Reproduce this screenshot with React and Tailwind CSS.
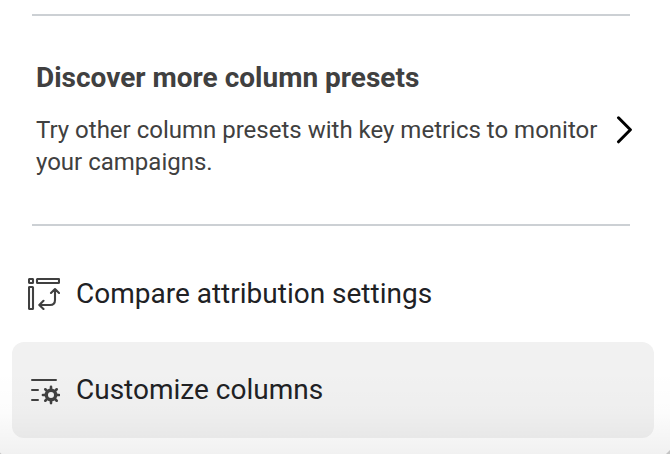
import React from 'react'

const teeth = [0, 45, 90, 135, 180, 225, 270, 315];

function CompareIcon() {
    return (
        <svg className="h-8 w-8 shrink-0" viewBox="0 0 32 32" fill="none" stroke="#404040" strokeWidth="2.1" strokeLinecap="round" strokeLinejoin="round">
            <rect x="1" y="1" width="4" height="4" rx="0.5" />
            <rect x="9" y="1" width="22" height="4" rx="0.5" />
            <rect x="1" y="9" width="4" height="22" rx="0.5" />
            <path d="M11.5 27H22C25.5 27 27 25 27 22V11M15.5 22.8L11.3 27L15.5 31M23 15L27 11L31 15" />
        </svg>
    )
}

function CustomizeIcon() {
    return (
        <svg className="h-8 w-8 shrink-0" viewBox="0 0 32 32" fill="none" stroke="#404040" strokeWidth="2" strokeLinecap="round">
            <path d="M4 6H28M4 16H10M4 26H10" />
            <circle cx="23" cy="21" r="4.7" strokeWidth="3.4" />
            {teeth.map((angle) => (
                <path key={angle} d="M23 15V12.9" strokeWidth="2.6" transform={`rotate(${angle} 23 21)`} />
            ))}
        </svg>
    )
}

function App() {
    return (
        <div className="relative h-[454px] w-[670px] overflow-hidden bg-white pt-[14px] font-['Roboto',sans-serif] text-[#202124]">
            <div className="ml-8 mr-10 flex h-[212px] items-start border-y-2 border-[#ccd0d4] pl-1 pt-11 text-[#404040]">
                <div className="w-[580px] shrink-0">
                    <h2 className="text-[28px] font-bold leading-9">Discover more column presets</h2>
                    <p className="mt-[18px] text-2xl leading-8">
                        Try other column presets with key metrics to monitor<br />your campaigns.
                    </p>
                </div>
                <svg className="mt-[54px] h-8 w-4 shrink-0" viewBox="0 0 16 32" fill="none" stroke="#000" strokeWidth="3" strokeLinecap="round" strokeLinejoin="round">
                    <path d="M2.5 3.8L14.4 15.8L2.5 27.8" />
                </svg>
            </div>

            <div className="mx-3 mr-4 mt-5 flex h-24 items-center gap-4 px-4 text-[28px]">
                <CompareIcon />
                <span>Compare attribution settings</span>
            </div>
            <div className="mx-3 mr-4 flex h-24 items-center gap-4 rounded-xl bg-[#f1f1f1] px-4 text-[28px]">
                <CustomizeIcon />
                <span>Customize columns</span>
            </div>

            {/* shade at the bottom edge of the menu */}
            <div className="pointer-events-none absolute inset-x-0 bottom-0 h-[84px] bg-gradient-to-b from-black/0 via-black/[0.012] to-black/[0.055]"></div>
            {/* what shows behind the rounded corners */}
            <svg className="pointer-events-none absolute bottom-0 right-0 h-1 w-1" viewBox="0 0 4 4" fill="#c4c4c4">
                <path d="M4 0L0 4H4Z" />
            </svg>
            <svg className="pointer-events-none absolute bottom-0 left-0 h-1 w-1" viewBox="0 0 4 4" fill="#c4c4c4">
                <path d="M0 2.5L1.5 4H0Z" />
            </svg>
        </div>
    )
}

export default App
